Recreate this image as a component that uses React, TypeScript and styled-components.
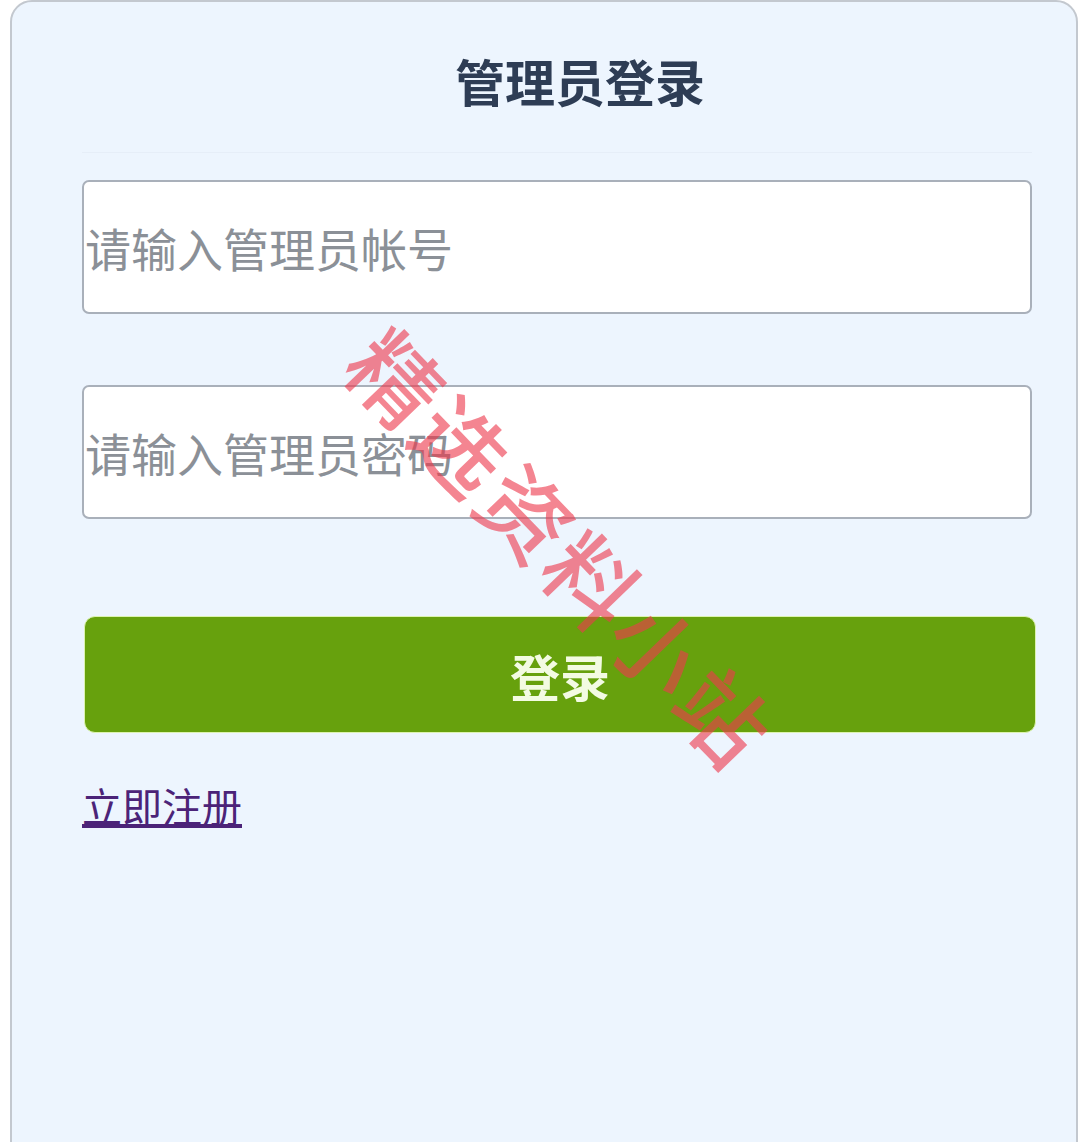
import styled, { createGlobalStyle } from "styled-components";

const GlobalStyle = createGlobalStyle`
  html, body {
    margin: 0;
    padding: 0;
    background: #ffffff;
  }
  body {
    font-family: "Noto Sans CJK SC", "Noto Sans", sans-serif;
  }
`;

const Page = styled.div`
  position: relative;
  width: 1080px;
  height: 1142px;
  overflow: hidden;
  padding-left: 10px;
  box-sizing: border-box;
`;

const Card = styled.div`
  width: 1068px;
  height: 1170px;
  box-sizing: border-box;
  border: 2px solid #c3c8cf;
  border-radius: 22px;
  background: #edf5fe;
  padding: 0 44px 0 70px;
`;

const Title = styled.h1`
  margin: 0;
  height: 150px;
  line-height: 156px;
  padding-left: 46px;
  text-align: center;
  font-size: 50px;
  font-weight: 700;
  color: #2e3d55;
  letter-spacing: 0;
  border-bottom: 1px solid #e6eef8;
`;

const Form = styled.form`
  display: flex;
  flex-direction: column;
  padding-top: 27px;
`;

const Input = styled.input<{ $gap?: number }>`
  width: 950px;
  height: 134px;
  box-sizing: border-box;
  margin-top: ${(p) => p.$gap ?? 0}px;
  padding: 0 0 0 1px;
  border: 2px solid #a9b0ba;
  border-radius: 7px;
  background: #ffffff;
  font-family: inherit;
  font-size: 46px;
  color: #333;
  outline: none;
  &::placeholder {
    color: #8b9097;
  }
`;

const Button = styled.button`
  width: 952px;
  height: 117px;
  margin: 97px 0 0 2px;
  border: 1px solid #dcf3b0;
  border-radius: 11px;
  background: #67a10d;
  color: #f3fbe2;
  font-family: inherit;
  font-size: 50px;
  font-weight: 700;
  cursor: pointer;
`;

const RegisterLink = styled.a`
  align-self: flex-start;
  margin-top: 48px;
  font-size: 40px;
  line-height: 48px;
  color: #4b2378;
  text-decoration: underline;
  letter-spacing: 0;
`;

const Watermark = styled.div`
  position: absolute;
  left: 563px;
  top: 546px;
  transform: translate(-50%, -50%) rotate(46deg);
  white-space: nowrap;
  font-size: 90px;
  font-weight: 500;
  letter-spacing: 4px;
  color: rgba(238, 58, 78, 0.62);
  pointer-events: none;
`;

export default function App() {
  return (
    <>
      <GlobalStyle />
      <Page>
        <Card>
          <Title>管理员登录</Title>
          <Form onSubmit={(e) => e.preventDefault()}>
            <Input type="text" placeholder="请输入管理员帐号" />
            <Input $gap={71} type="password" placeholder="请输入管理员密码" />
            <Button type="submit">登录</Button>
            <RegisterLink href="#">立即注册</RegisterLink>
          </Form>
        </Card>
        <Watermark>精选资料小站</Watermark>
      </Page>
    </>
  );
}
